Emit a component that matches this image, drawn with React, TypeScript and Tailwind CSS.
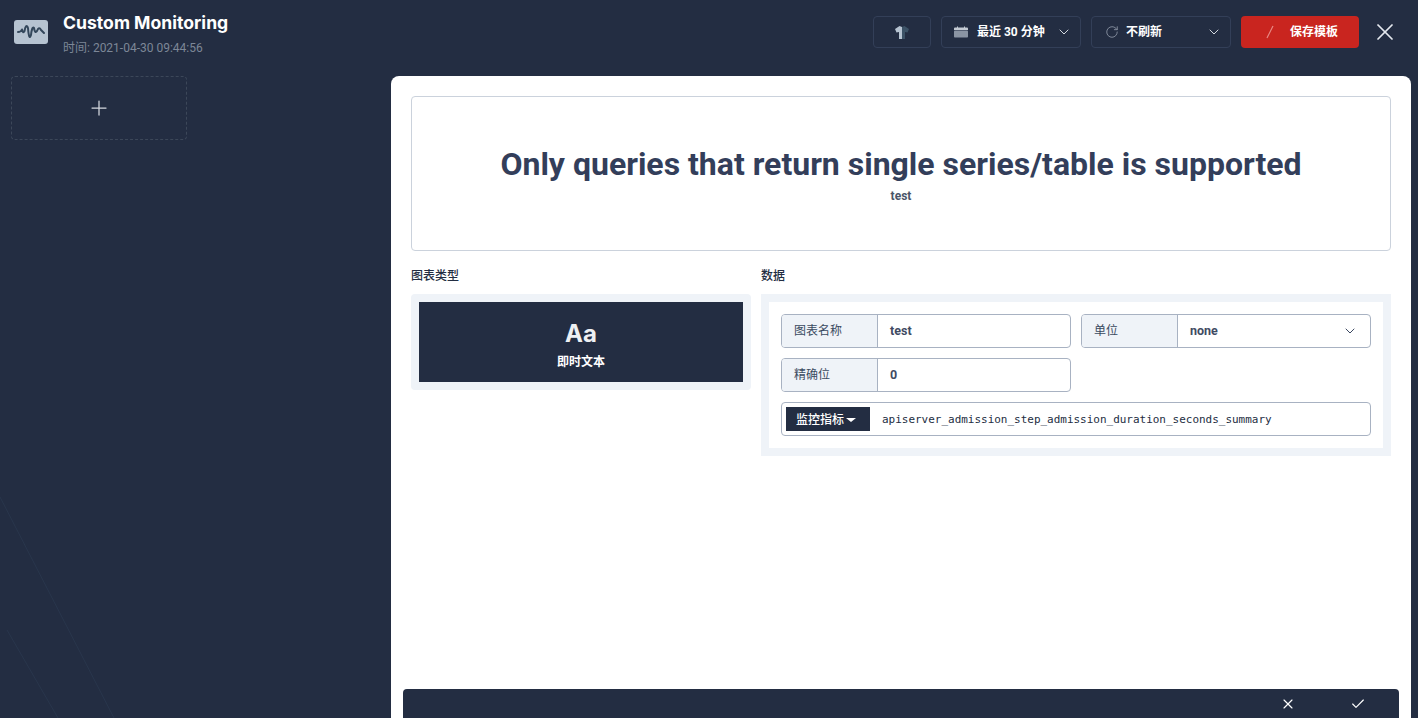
import { ChevronDown, X, Check, Plus, RotateCw } from "lucide-react";

const Field = ({ label, value, wide }: { label: string; value: string; wide?: boolean }) => {
  return (
    <div className="flex h-[34px] w-[290px] rounded border border-[#a8b2c2] bg-white">
      <div className="flex w-[96px] items-center rounded-l-[3px] border-r border-[#a8b2c2] bg-[#eff3f8] pl-3 text-xs text-[#3a4a60]">
        {label}
      </div>
      <div className={`flex flex-1 items-center justify-between pl-3 text-[12.5px] font-bold text-[#3f4b63] ${wide ? "pr-[12px]" : ""}`}>
        <span>{value}</span>
        {wide && <ChevronDown size={16} strokeWidth={1.5} className="text-[#3a4660]" />}
      </div>
    </div>
  );
};

const App = () => {
  return (
    <div className="relative flex h-[718px] w-[1418px] flex-col overflow-hidden bg-[#232d42] font-['Roboto','Noto_Sans_CJK_SC',sans-serif]">
      {/* faint background strokes */}
      <svg className="absolute bottom-0 left-0" width="130" height="225" viewBox="0 0 130 225">
        <path d="M0 4 L114 225" stroke="#29364c" strokeWidth="1" fill="none" />
        <path d="M7 137 L58 225" stroke="#29364c" strokeWidth="1" fill="none" />
      </svg>

      <header className="relative flex h-[76px] shrink-0 items-start justify-between pt-4 pr-[19px]">
        <div className="flex pl-[14px]">
          <div className="mt-1 h-[24px] w-[34px] rounded-[3px] bg-[#b6c3d1]">
            <svg width="34" height="24" viewBox="0 0 34 24" fill="none">
              <path
                d="M4 12 Q7 12 8 9.5 Q9 14 10.5 11 Q12 3 14 8 Q15 21 17 15 Q18 6 20 8 Q21 14 23 11 Q25 6 27 10 L30 13"
                stroke="#33475b"
                strokeWidth="2"
                strokeLinecap="round"
                strokeLinejoin="round"
              />
            </svg>
          </div>
          <div className="ml-[15px] -mt-[4px]">
            <div className="font-['Inter',sans-serif] text-[17.6px] leading-[22px] font-bold text-white">Custom Monitoring</div>
            <div className="mt-[5px] text-xs leading-[18px] text-[#7d8797]">时间: 2021-04-30 09:44:56</div>
          </div>
        </div>

        <div className="flex items-center">
          <button className="flex h-8 w-[58px] items-center justify-center rounded border border-[#333f58]">
            <svg width="14" height="13" viewBox="0 0 14 13">
              <path d="M4.5 0 L7 1 V13 H4 V6 L1.5 6.5 L0 3 Z" fill="#b6c3d1" />
              <path d="M9.5 0 L7 1 V13 H10 V6 L12.5 6.5 L14 3 Z" fill="#3c5266" />
            </svg>
          </button>
          <button className="ml-[10px] flex h-8 w-[140px] items-center rounded border border-[#333f58] pl-[12px] pr-[8px]">
            <svg width="14" height="12" viewBox="0 0 14 12" fill="#8a94a3">
              <path d="M0 2.5 Q0 1.5 1 1.5 H3 V0.5 H4 V1.5 H10 V0.5 H11 V1.5 H13 Q14 1.5 14 2.5 V4 H0 Z" fill="#c2c9d2" />
              <rect x="0" y="4.6" width="14" height="7" rx="0.8" />
            </svg>
            <span className="ml-[9px] text-xs font-bold whitespace-nowrap text-white">最近 30 分钟</span>
            <ChevronDown size={16} strokeWidth={1.5} className="ml-auto text-[#d5dae1]" />
          </button>
          <button className="ml-[10px] flex h-8 w-[140px] items-center rounded border border-[#333f58] pl-[13px] pr-[8px]">
            <RotateCw size={14} strokeWidth={1.5} className="text-[#8a94a3]" />
            <span className="ml-[7px] text-xs font-bold whitespace-nowrap text-white">不刷新</span>
            <ChevronDown size={16} strokeWidth={1.5} className="ml-auto text-[#d5dae1]" />
          </button>
          <button className="ml-[10px] flex h-8 w-[118px] items-center rounded bg-[#c9251f] pl-6">
            <svg width="10" height="14" viewBox="0 0 10 14">
              <path d="M8 1 L2 13" stroke="#e88a86" strokeWidth="1.2" />
            </svg>
            <span className="ml-[15px] text-xs font-bold whitespace-nowrap text-white">保存模板</span>
          </button>
          <X size={28} strokeWidth={1.5} className="ml-[12px] text-[#e4e8ee]" />
        </div>
      </header>

      <div className="relative flex min-h-0 flex-1">
        <div className="w-[391px] shrink-0 pl-[11px]">
          <div className="flex h-16 w-[176px] items-center justify-center rounded border border-dashed border-[#3c4759]">
            <Plus size={24} strokeWidth={1.25} className="text-[#d5d9df]" />
          </div>
        </div>

        <main className="flex w-[1020px] flex-col rounded-t-lg bg-white">
          <div className="mx-5 mt-5 flex h-[155px] flex-col items-center rounded-sm border border-[#cbd2dc] pt-[47px]">
            <h1 className="text-[32px] leading-[40px] font-bold text-[#333e5a]">
              Only queries that return single series/table is supported
            </h1>
            <p className="mt-1 text-xs font-bold text-[#4a5568]">test</p>
          </div>

          <div className="mx-5 mt-4 flex gap-[10px]">
            <section className="w-[340px]">
              <h3 className="text-xs leading-[18px] font-medium text-[#232d42]">图表类型</h3>
              <div className="mt-[9px] rounded bg-[#eff3f8] p-2">
                <div className="flex h-20 flex-col items-center justify-center bg-[#232d42] pt-[3px]">
                  <div className="font-['Inter',sans-serif] text-2xl leading-[32px] font-bold text-[#eef0f3]">Aa</div>
                  <div className="mt-1 text-xs font-bold text-white">即时文本</div>
                </div>
              </div>
            </section>

            <section className="w-[630px]">
              <h3 className="text-xs leading-[18px] font-medium text-[#232d42]">数据</h3>
              <div className="mt-[9px] bg-[#eff3f8] p-2">
                <div className="flex flex-col gap-[10px] bg-white px-3 py-3">
                  <div className="flex gap-[10px]">
                    <Field label="图表名称" value="test" />
                    <Field label="单位" value="none" wide />
                  </div>
                  <Field label="精确位" value="0" />
                  <div className="flex h-[34px] items-center rounded border border-[#a8b2c2] pl-1">
                    <div className="flex h-6 w-[84px] items-center bg-[#232d42] pt-px pl-[10px] text-xs font-medium text-white">
                      监控指标
                      <span className="ml-[2px] h-0 w-0 border-x-[5px] border-t-[4px] border-x-transparent border-t-white" />
                    </div>
                    <span className="mt-[2px] ml-3 font-['DejaVu_Sans_Mono',monospace] text-[10.97px] text-[#232d42]">
                      apiserver_admission_step_admission_duration_seconds_summary
                    </span>
                  </div>
                </div>
              </div>
            </section>
          </div>

          <div className="mx-3 mt-auto flex h-[29px] items-center justify-end rounded-t-sm bg-[#232d42] pr-[33px]">
            <X size={16} strokeWidth={1.75} className="text-white" />
            <Check size={16} strokeWidth={1.75} className="ml-[54px] text-white" />
          </div>
        </main>
      </div>
    </div>
  );
};

export default App;
